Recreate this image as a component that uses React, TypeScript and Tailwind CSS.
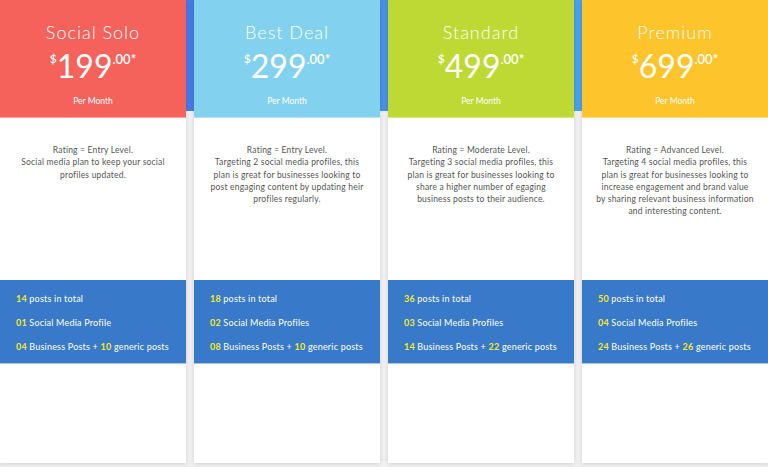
import React from 'react';

type Plan = {
  name: string;
  price: string;
  color: string;
  level: string;
  text: string;
  features: React.ReactNode[];
};

const Y = ({ children }: { children: React.ReactNode }) => (
  <span className="font-bold text-[#f6e829]">{children}</span>
);

const plans: Plan[] = [
  {
    name: 'Social Solo',
    price: '199',
    color: 'bg-[#f4625b]',
    level: 'Entry Level.',
    text: 'Social media plan to keep your social profiles updated.',
    features: [
      <><Y>14</Y> posts in total</>,
      <><Y>01</Y> Social Media Profile</>,
      <><Y>04</Y> Business Posts + <Y>10</Y> generic posts</>,
    ],
  },
  {
    name: 'Best Deal',
    price: '299',
    color: 'bg-[#82d1ee]',
    level: 'Entry Level.',
    text: 'Targeting 2 social media profiles, this plan is great for businesses looking to post engaging content by updating heir profiles regularly.',
    features: [
      <><Y>18</Y> posts in total</>,
      <><Y>02</Y> Social Media Profiles</>,
      <><Y>08</Y> Business Posts + <Y>10</Y> generic posts</>,
    ],
  },
  {
    name: 'Standard',
    price: '499',
    color: 'bg-[#bed834]',
    level: 'Moderate Level.',
    text: 'Targeting 3 social media profiles, this plan is great for businesses looking to share a higher number of egaging business posts to their audience.',
    features: [
      <><Y>36</Y> posts in total</>,
      <><Y>03</Y> Social Media Profiles</>,
      <><Y>14</Y> Business Posts + <Y>22</Y> generic posts</>,
    ],
  },
  {
    name: 'Premium',
    price: '699',
    color: 'bg-[#fec42b]',
    level: 'Advanced Level.',
    text: 'Targeting 4 social media profiles, this plan is great for businesses looking to increase engagement and brand value by sharing relevant business information and interesting content.',
    features: [
      <><Y>50</Y> posts in total</>,
      <><Y>04</Y> Social Media Profiles</>,
      <><Y>24</Y> Business Posts + <Y>26</Y> generic posts</>,
    ],
  },
];

const PlanCard = ({ plan }: { plan: Plan }) => (
  <div className="flex h-[463px] flex-1 flex-col bg-white shadow-[0_1px_4px_rgba(0,0,0,0.12)]">
    <div className={`${plan.color} flex h-[118px] flex-col items-center border-b border-white/40 pt-[20px] text-white`}>
      <h2 className="text-[18px] font-light leading-[24px] tracking-[1px]">{plan.name}</h2>
      <div className="mt-[6px] flex items-start leading-none">
        <span className="mt-[3px] text-[12px] font-semibold">$</span>
        <span className="text-[32px] leading-[32px]">{plan.price}</span>
        <span className="mt-[3px] text-[13px] font-semibold">.00*</span>
      </div>
      <div className="mt-[13px] text-[8.5px] leading-[12px]">Per Month</div>
    </div>
    <div className="h-[162px] px-[14px] pt-[26px] text-center text-[8.5px] leading-[12.3px] tracking-[0.2px] text-[#555]">
      Rating = {plan.level}
      <br />
      {plan.text}
    </div>
    <div className="flex h-[84px] flex-col gap-[8px] border-b border-[#a9c6ea] bg-[#387ac9] px-[16px] pt-[11px] text-[9px] leading-[16px] tracking-[0.2px] text-white">
      {plan.features.map((f, i) => (
        <div key={i}>{f}</div>
      ))}
    </div>
  </div>
);

export default function App() {
  return (
    <div
      className="flex h-[467px] w-[768px] gap-[8px] bg-[#efefef] bg-[linear-gradient(to_right,#4264e0,#4a8fe6,#45b2ea)] bg-[length:100%_111px] bg-no-repeat"
      style={{ fontFamily: 'Lato, "Open Sans", sans-serif' }}
    >
      {plans.map((p) => (
        <PlanCard key={p.name} plan={p} />
      ))}
    </div>
  );
}
